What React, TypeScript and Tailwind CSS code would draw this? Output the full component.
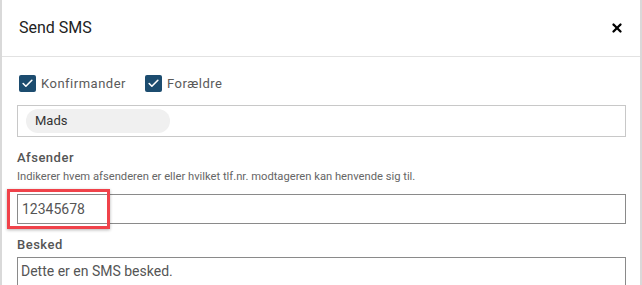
import React from 'react';
import { X, Check } from 'lucide-react';

const Box = ({ label }: { label: string }) => (
  <label className="flex h-[17px] items-center gap-[5px]">
    <span className="flex h-[17px] w-[17px] items-center justify-center rounded-[2px] bg-[#1c4c6f]">
      <Check size={13} strokeWidth={3} className="text-white" />
    </span>
    <span className="text-[13px] leading-[17px] tracking-[0.5px] text-[#5a5a5a]">{label}</span>
  </label>
);

const App = () => {
  return (
    <div className="flex h-[285px] w-[642px] overflow-hidden bg-[#d9d9d9] font-['Roboto',sans-serif]">
      <div className="ml-[2px] w-[638px] bg-white">
        {/* header */}
        <div className="flex h-[57px] items-center justify-between border-b border-[#e2e2e2] pl-[17px] pr-[16px]">
          <h2 className="text-[16px] text-[#222]">Send SMS</h2>
          <X size={14} strokeWidth={4} className="text-black" />
        </div>

        {/* body */}
        <div className="pl-[15px] pr-[14px] pt-[18px]">
          <div className="flex gap-[19px] pl-[2px]">
            <Box label="Konfirmander" />
            <Box label="Forældre" />
          </div>

          <div className="mt-[13px] flex h-[32px] items-center border border-[#c8c8c8] px-[8px]">
            <span className="flex h-[24px] w-[144px] items-center rounded-full bg-[#f0f0f0] pl-[9px] text-[13px] text-[#333]">
              Mads
            </span>
          </div>

          <div className="mt-[11px] text-[13px] leading-[20px] font-medium tracking-[0.5px] text-[#555]">Afsender</div>
          <div className="mt-[1px] text-[11.2px] leading-[16px] text-[#666]">
            Indikerer hvem afsenderen er eller hvilket tlf.nr. modtageren kan henvende sig til.
          </div>

          <div className="relative mt-[9px]">
            <div className="flex h-[30px] items-center border border-[#8a8a8a] px-[4px] text-[14px] text-[#555]">
              12345678
            </div>
            <div className="absolute left-[-10px] top-[-5px] h-[40px] w-[103px] border-[3px] border-[#f0424a] shadow-[0_1px_3px_rgba(0,0,0,0.3)]" />
          </div>

          <div className="mt-[11px] text-[13px] leading-[20px] font-medium tracking-[0.5px] text-[#555]">Besked</div>
          <div className="mt-[2px] h-[60px] border border-[#8a8a8a] px-[3px] pt-[3px] text-[14px] text-[#555]">
            Dette er en SMS besked.
          </div>
        </div>
      </div>
    </div>
  );
};

export default App;
